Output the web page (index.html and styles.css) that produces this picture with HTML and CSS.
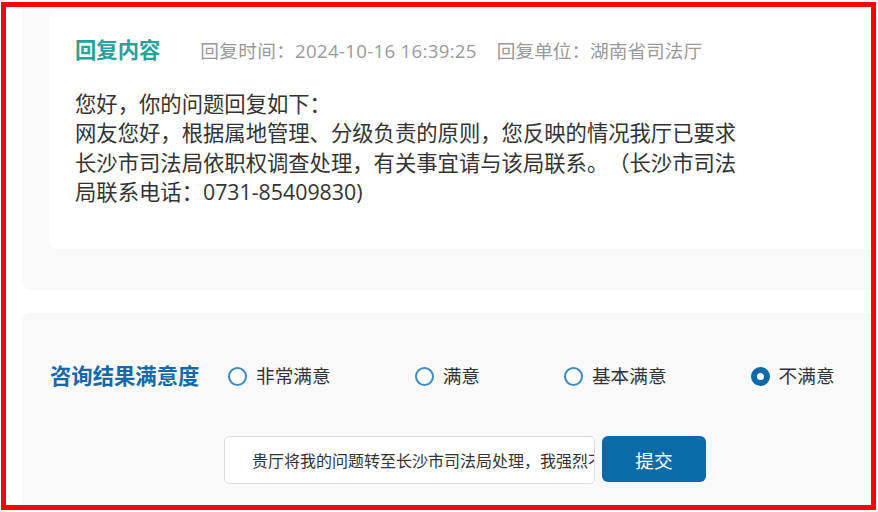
FILE: index.html
```html
<!DOCTYPE html>
<html>
<head>
  <meta charset="utf-8">
  <title>回复内容</title>
  <link rel="stylesheet" href="styles.css">
</head>
<body>
  <div class="frame">
    <div class="panel reply-panel">
      <div class="reply-card">
        <div class="reply-head">
          <h2 class="reply-title">回复内容</h2>
          <span class="reply-meta">回复时间：2024-10-16 16:39:25</span>
          <span class="reply-meta">回复单位：湖南省司法厅</span>
        </div>
        <p class="reply-text">您好，你的问题回复如下：<br>网友您好，根据属地管理、分级负责的原则，您反映的情况我厅已要求长沙市司法局依职权调查处理，有关事宜请与该局联系。（长沙市司法局联系电话：0731-85409830)</p>
      </div>
    </div>

    <div class="panel rate-panel">
      <form class="rate-form">
        <div class="rate-label">咨询结果满意度</div>
        <div class="rate-options">
          <label class="option"><input type="radio" name="rate" value="1"><span>非常满意</span></label>
          <label class="option"><input type="radio" name="rate" value="2"><span>满意</span></label>
          <label class="option"><input type="radio" name="rate" value="3"><span>基本满意</span></label>
          <label class="option"><input type="radio" name="rate" value="4" checked><span>不满意</span></label>
        </div>
        <div></div>
        <div class="rate-submit">
          <input type="text" class="rate-input" value="贵厅将我的问题转至长沙市司法局处理，我强烈不满，要求贵厅直接处理">
          <button type="button" class="rate-btn">提交</button>
        </div>
      </form>
    </div>
  </div>
</body>
</html>
```

FILE: styles.css
```css
body {
  margin: 0;
  background-color: #fff;
  font-family: "Open Sans", "Noto Sans CJK SC", sans-serif;
  color: #333;
  text-spacing-trim: space-all;
}

.frame {
  width: 865px;
  height: 498px;
  margin: 2px 0 0 1px;
  border: 5px solid #ff0000;
  overflow: hidden;
  background-color: #fff;
}

.panel {
  width: 900px;
  margin-left: 16px;
  background-color: #f9f9f9;
  border-radius: 8px;
}

.reply-panel {
  margin-top: -10px;
  padding: 14px 0 41px 27px;
}

.reply-card {
  background-color: #fff;
  border-radius: 8px;
  padding: 24px 0 43px 26px;
}

.reply-head {
  display: flex;
  align-items: baseline;
  height: 30px;
}

.reply-title {
  margin: 0 40px 0 0;
  font-size: 21.33px;
  line-height: 30px;
  font-weight: bold;
  color: #29a19b;
}

.reply-meta {
  margin-right: 20px;
  font-size: 18.67px;
  color: #999;
}

.reply-meta:first-of-type {
  letter-spacing: 0.3px;
}

.reply-text {
  width: 665px;
  margin: 24px 0 0;
  font-size: 21.33px;
  line-height: 29.33px;
  color: #333;
}

.rate-panel {
  margin-top: 23px;
  height: 260px;
  padding: 48px 0 0 28px;
}

.rate-form {
  display: grid;
  grid-template-columns: 174px auto;
  row-gap: 45px;
}

.rate-label {
  font-size: 21.33px;
  line-height: 30px;
  font-weight: bold;
  color: #1668a6;
}

.rate-options {
  display: flex;
  align-items: center;
  gap: 84px;
  padding-left: 4px;
}

.option {
  display: flex;
  align-items: center;
  gap: 9px;
  font-size: 18.67px;
  line-height: 30px;
  color: #333;
  cursor: pointer;
}

.option input {
  appearance: none;
  -webkit-appearance: none;
  width: 19px;
  height: 19px;
  margin: 0;
  border: 2px solid #3d8cc4;
  border-radius: 50%;
  background-color: #fff;
  box-sizing: border-box;
}

.option input:checked {
  border: 6px solid #0b6aa8;
  background-color: #fff;
}

.rate-submit {
  display: flex;
  align-items: flex-start;
  gap: 7px;
}

.rate-input {
  width: 371px;
  height: 48px;
  box-sizing: border-box;
  padding: 0 0 0 27px;
  border: 1px solid #ddd;
  border-radius: 5px;
  background-color: #fff;
  font-family: "Noto Sans CJK SC", sans-serif;
  font-size: 16px;
  color: #333;
  outline: none;
}

.rate-btn {
  width: 104px;
  height: 46px;
  border: none;
  border-radius: 6px;
  background-color: #0b6aa8;
  color: #fff;
  font-family: "Noto Sans CJK SC", sans-serif;
  font-size: 18.67px;
  cursor: pointer;
}
```
